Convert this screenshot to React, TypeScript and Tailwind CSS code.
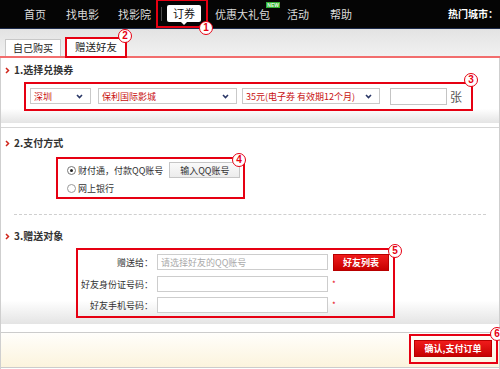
const font = { fontFamily: '"Noto Sans CJK SC", "Noto Sans", sans-serif' }

const Mark = ({ n, className }: { n: string; className: string }) => (
  <span
    className={`absolute z-20 w-[14px] h-[14px] rounded-full border-[1.5px] border-[#e60012] bg-white text-[#e60012] text-[10px] font-bold leading-none flex items-center justify-center ${className}`}
    style={{ fontFamily: '"Liberation Sans", sans-serif' }}
  >
    {n}
  </span>
)

const Sep = () => <span className="w-px h-[14px] bg-[#4a4a4a]" />

const Chevron = () => (
  <svg width="7" height="5" viewBox="0 0 7 5" className="shrink-0">
    <path d="M1 1l2.5 2.5L6 1" stroke="#2a3766" strokeWidth="1.6" fill="none" />
  </svg>
)

const Arrow = () => (
  <svg width="5" height="7" viewBox="0 0 5 7" className="shrink-0">
    <path d="M1 1l2.5 2.5L1 6" stroke="#d0261b" strokeWidth="1.5" fill="none" />
  </svg>
)

const Title = ({ text }: { text: string }) => (
  <div className="flex items-center h-[12px] pl-[4px] gap-[4px] text-[10px] leading-[12px] font-bold text-[#333]">
    <Arrow />
    <span>{text}</span>
  </div>
)

const Select = ({ text, w }: { text: string; w: string }) => (
  <div className={`h-[16px] ${w} border border-[#c9c9c9] bg-white flex items-center justify-between pl-[3px] pr-[7px]`}>
    <span className="text-[9px] leading-none text-[#c81010] whitespace-nowrap">{text}</span>
    <Chevron />
  </div>
)

const RedBtn = ({ text, w }: { text: string; w: string }) => (
  <div className={`${w} h-[17px] flex items-center justify-center bg-gradient-to-b from-[#f01b1b] to-[#c70000] border border-[#b80000] text-white text-[9px] font-bold leading-none`}>
    {text}
  </div>
)

export default function App() {
  return (
    <div className="w-[500px] h-[369px] overflow-hidden bg-white" style={font}>
      {/* top nav */}
      <div className="h-[29px] bg-[#050505] border-b border-[#1c2a4a] flex items-center text-[11px] leading-none text-[#dcdcdc] pl-[24px] pr-[2px]">
        <span>首页</span>
        <span className="ml-[10px]"><Sep /></span>
        <span className="ml-[10px]">找电影</span>
        <span className="ml-[8px]"><Sep /></span>
        <span className="ml-[11px]">找影院</span>
        <div className="relative ml-[5px] h-[29px] -mt-px w-[52px] border-2 border-[#e60012] flex items-center pl-[3px]">
          <Sep />
          <div className="relative ml-[5px] w-[34px] h-[17px] bg-white rounded-[2px] flex items-center justify-center text-[#111] text-[11px]">
            订券
            <span className="absolute left-[14px] -bottom-[3px] w-0 h-0 border-x-[3px] border-x-transparent border-t-[3px] border-t-white" />
          </div>
          <span className="ml-[3px]"><Sep /></span>
          <Mark n="1" className="left-[41px] top-[20px]" />
        </div>
        <span className="relative ml-[7px]">
          优惠大礼包
          <span className="absolute -right-[10px] -top-[7px] px-[1px] h-[6px] bg-[#2fae2f] text-[5px] leading-[6px] text-[#e8ffe8] font-bold" style={{ fontFamily: '"Liberation Sans", sans-serif' }}>NEW</span>
        </span>
        <span className="ml-[7px]"><Sep /></span>
        <span className="ml-[10px]">活动</span>
        <span className="ml-[10px]"><Sep /></span>
        <span className="ml-[11px]">帮助</span>
        <span className="ml-auto font-bold text-white text-[10px]">热门城市：</span>
      </div>

      {/* tabs */}
      <div className="h-[27px] bg-gradient-to-b from-[#e3e3e3] to-[#f1f1f1] flex items-end pl-[5px] gap-[4px]">
        <div className="w-[56px] h-[17px] bg-white border border-b-0 border-[#c8c8c8] flex items-center justify-center text-[10px] leading-none text-[#222]">
          自己购买
        </div>
        <div className="relative w-[62px] h-[21px] -mb-[2px] z-10 border-2 border-[#e60012] bg-white flex items-center justify-center text-[10.5px] leading-none text-[#222]">
          赠送好友
          <Mark n="2" className="left-[51px] -top-[10px]" />
        </div>
      </div>
      <div className="h-[2px] bg-[#f26d6d]" />

      <div className="border-x border-[#cfcfcf] h-[311px] flex flex-col">
        {/* section 1 */}
        <div className="h-[65px] pt-[6px] bg-gradient-to-b from-white from-[78%] to-[#e4e4e4]">
          <Title text="1.选择兑换券" />
          <div className="relative mt-[6px] ml-[23px] w-[449px] h-[29px] border-2 border-[#e60012] flex items-start pt-[4px] pl-[4px]">
            <Select text="深圳" w="w-[61px]" />
            <div className="ml-[7px]"><Select text="保利国际影城" w="w-[139px]" /></div>
            <div className="ml-[5px]"><Select text="35元(电子券  有效期12个月)" w="w-[138px]" /></div>
            <div className="ml-[10px] w-[57px] h-[17px] border border-[#c4c4c4] bg-white" />
            <span className="ml-[3px] text-[12px] leading-[17px] text-[#555]">张</span>
            <Mark n="3" className="left-[438px] -top-[11px]" />
          </div>
        </div>

        {/* sections 2 + 3 */}
        <div className="mt-[4px] h-[197px] border-t border-[#d6d6d6] bg-gradient-to-b from-white from-[88%] to-[#e4e4e4]">
          <div className="pt-[9px]">
            <Title text="2.支付方式" />
          </div>
          <div className="relative mt-[8px] ml-[55px] w-[189px] h-[42px] border-2 border-[#e60012] pt-[3px] pl-[9px] text-[9px] leading-none text-[#333]">
            <div className="flex items-center h-[16px]">
              <span className="w-[9px] h-[9px] rounded-full border border-[#777] bg-white flex items-center justify-center">
                <span className="w-[3px] h-[3px] rounded-full bg-[#222]" />
              </span>
              <span className="ml-[2px]">财付通，付款QQ账号</span>
              <div className="ml-[6px] w-[71px] h-[16px] bg-gradient-to-b from-[#fafafa] to-[#ececec] border border-[#c6c6c6] flex items-center justify-center">
                输入QQ账号
              </div>
            </div>
            <div className="flex items-center h-[14px] mt-[3px]">
              <span className="w-[9px] h-[9px] rounded-full border border-[#999] bg-white" />
              <span className="ml-[2px]">网上银行</span>
            </div>
            <Mark n="4" className="left-[174px] -top-[6px]" />
          </div>
          <div className="mt-[15px] mx-[13px] border-t border-dashed border-[#cfcfcf]" />

          <div className="pt-[15px]">
            <Title text="3.赠送对象" />
          </div>
          <div className="relative mt-[6px] ml-[75px] w-[319px] h-[70px] border-2 border-[#e60012] pt-[3px] text-[9px] leading-none text-[#333]">
            <div className="flex items-center h-[18px]">
              <span className="w-[75px] text-right">赠送给：</span>
              <div className="ml-[4px] w-[171px] h-[16px] border border-[#cdcdcd] bg-white flex items-center pl-[3px] text-[#aaa]">
                请选择好友的QQ账号
              </div>
              <div className="ml-[5px]"><RedBtn text="好友列表" w="w-[56px]" /></div>
            </div>
            <div className="flex items-center h-[16px] mt-[5px]">
              <span className="w-[75px] text-right">好友身份证号码：</span>
              <div className="ml-[4px] w-[171px] h-[16px] border border-[#cdcdcd] bg-white" />
              <span className="ml-[4px] text-[#e60012] text-[8px]">*</span>
            </div>
            <div className="flex items-center h-[16px] mt-[5px]">
              <span className="w-[75px] text-right">好友手机号码：</span>
              <div className="ml-[4px] w-[171px] h-[16px] border border-[#cdcdcd] bg-white" />
              <span className="ml-[4px] text-[#e60012] text-[8px]">*</span>
            </div>
            <Mark n="5" className="left-[310px] -top-[6px]" />
          </div>
        </div>

        {/* footer */}
        <div className="mt-[8px] h-[36px] border-y border-[#cccccc] bg-gradient-to-b from-[#fffefb] to-[#fcf4dd] flex justify-end items-start pr-[1px]">
          <div className="relative mt-[1px] w-[89px] h-[30px] border-2 border-[#e60012] pt-[4px] pl-[3px]">
            <RedBtn text="确认,支付订单" w="w-[78px]" />
            <Mark n="6" className="left-[79px] -top-[9px]" />
          </div>
        </div>
      </div>
    </div>
  )
}
